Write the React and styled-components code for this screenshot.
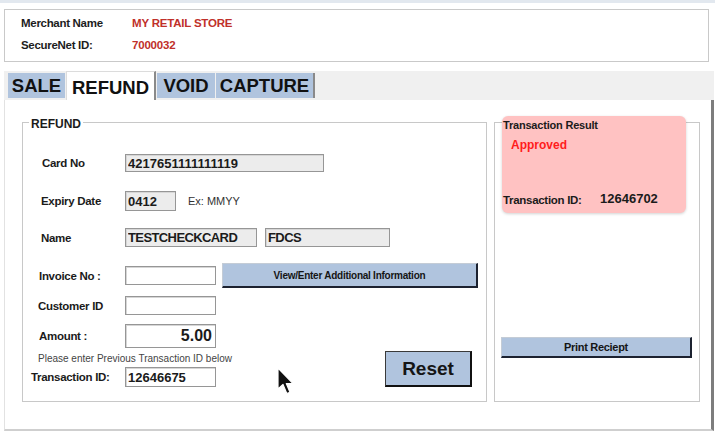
import React from "react";
import styled, { createGlobalStyle } from "styled-components";

const GlobalStyle = createGlobalStyle`
  html, body { margin: 0; padding: 0; background: #fff; }
  body { font-family: "Liberation Sans", Arial, sans-serif; color: #1b1b1b; }
  #root { width: 715px; height: 434px; }
`;

const Page = styled.div`
  width: 715px;
  height: 434px;
  overflow: hidden;
  background: #fff;
  display: flex;
  flex-direction: column;
`;

const TopBar = styled.div`
  height: 3px;
  background: #e2e8ef;
`;

const InfoBox = styled.div`
  margin: 6px 0 0 4px;
  width: 705px;
  height: 53px;
  box-sizing: border-box;
  border: 1px solid #c9c9c9;
  padding: 6px 0 0 16px;
  display: flex;
  flex-direction: column;
  gap: 8px;
`;

const InfoRow = styled.div`
  display: flex;
  align-items: center;
  height: 14px;
`;

const InfoLabel = styled.span`
  width: 111px;
  font-size: 11.5px;
  font-weight: bold;
  letter-spacing: -0.3px;
  color: #1d1d1d;
`;

const InfoValue = styled.span`
  font-size: 11.5px;
  font-weight: bold;
  letter-spacing: -0.2px;
  color: #c0302a;
`;

const TabStrip = styled.div`
  margin: 9px 0 0 4px;
  width: 710px;
  height: 29px;
  box-sizing: border-box;
  background: #f0f0f0;
  display: flex;
  align-items: flex-start;
  padding-left: 4px;
`;

const Tab = styled.div`
  box-sizing: border-box;
  width: ${(p) => p.$w}px;
  height: ${(p) => (p.$active ? 29 : 25)}px;
  margin-top: ${(p) => (p.$active ? 0 : 2)}px;
  margin-right: 1px;
  padding-top: ${(p) => (p.$active ? 3 : 1)}px;
  background: ${(p) => (p.$active ? "#fff" : "#b0c4de")};
  border-left: ${(p) => (p.$active ? "1px solid #dcdcdc" : "none")};
  border-top: ${(p) => (p.$active ? "1px solid #dcdcdc" : "none")};
  border-right: ${(p) => (p.$active || p.$last ? "2px solid #8a8a8a" : "none")};
  display: flex;
  align-items: center;
  justify-content: center;
  font-size: 18.5px;
  font-weight: bold;
  color: #111;
`;

const Panel = styled.div`
  position: relative;
  margin-left: 4px;
  width: 710px;
  height: 331px;
  box-sizing: border-box;
  border-left: 1px solid #e2e2e2;
  border-right: 3px solid #7d7d7d;
  border-bottom: 2px solid #cfcfcf;
  padding: 22px 0 0 17px;
  display: flex;
  align-items: flex-start;
  gap: 7px;
`;

const GroupBox = styled.div`
  position: relative;
  box-sizing: border-box;
  width: ${(p) => p.$w}px;
  height: 280px;
  border: 1px solid #c8c8c8;
  display: flex;
  flex-direction: column;
`;

const Legend = styled.span`
  position: absolute;
  top: -6px;
  left: 6px;
  padding: 0 2px;
  background: #fff;
  font-size: 12px;
  font-weight: bold;
  color: #1b1b1b;
`;

const FormRows = styled.div`
  display: flex;
  flex-direction: column;
  padding-top: 31px;
`;

const FormRow = styled.div`
  display: grid;
  grid-template-columns: 102px auto;
  align-items: center;
  height: ${(p) => p.$h}px;
  margin-top: ${(p) => p.$mt || 0}px;
`;

const Label = styled.span`
  padding-left: ${(p) => p.$in}px;
  font-size: 11.5px;
  font-weight: bold;
  letter-spacing: -0.3px;
  color: #1b1b1b;
  white-space: nowrap;
`;

const Fields = styled.div`
  display: flex;
  align-items: center;
  gap: ${(p) => p.$gap || 8}px;
  height: 100%;
`;

const Field = styled.input`
  box-sizing: border-box;
  width: ${(p) => p.$w}px;
  height: ${(p) => p.$h}px;
  margin: 0;
  padding: 0 ${(p) => (p.$right ? 3 : 2)}px 0 2px;
  border: 1px solid #969696;
  box-shadow: inset 1px 1px 0 #d6d6d6;
  background: ${(p) => (p.$gray ? "#ececec" : "#fff")};
  font-family: "Liberation Sans", Arial, sans-serif;
  font-size: ${(p) => p.$fs || 13}px;
  font-weight: bold;
  letter-spacing: ${(p) => (p.$tight ? "-0.6px" : "0")};
  text-align: ${(p) => (p.$right ? "right" : "left")};
  color: #1b1b1b;
  outline: none;
`;

const Hint = styled.span`
  font-size: 11px;
  color: #333;
  margin-left: 2px;
`;

const Note = styled.div`
  height: 12px;
  margin-top: 5px;
  padding-left: 15px;
  font-size: 10px;
  line-height: 12px;
  color: #444;
  white-space: nowrap;
`;

const FlatButton = styled.button`
  box-sizing: border-box;
  width: ${(p) => p.$w}px;
  height: ${(p) => p.$h}px;
  margin: 0;
  padding: 0;
  background: #b0c4de;
  border-top: 1px solid #c4ccd6;
  border-left: 1px solid #c4ccd6;
  border-right: 2px solid #1c2230;
  border-bottom: 2px solid #1c2230;
  font-family: "Liberation Sans", Arial, sans-serif;
  font-size: ${(p) => p.$fs || 11}px;
  font-weight: bold;
  letter-spacing: ${(p) => p.$ls || 0}px;
  color: #151515;
`;

const BottomBlock = styled.div`
  display: flex;
  align-items: flex-end;
  margin-top: 8px;
`;

const LeftCol = styled.div`
  display: flex;
  flex-direction: column;
`;

const ResetButton = styled(FlatButton)`
  margin-left: auto;
  margin-right: 14px;
  border-top: 1px solid #3a3a3a;
  border-left: 1px solid #3a3a3a;
  border-right: 2px solid #111;
  border-bottom: 2px solid #111;
`;

const ResultCard = styled.div`
  box-sizing: border-box;
  margin: -7px 0 0 7px;
  width: 184px;
  height: 97px;
  border-radius: 6px;
  background: #ffc2c2;
  box-shadow: 0 1px 3px rgba(0, 0, 0, 0.18);
  padding: 2px 0 7px 1px;
  display: flex;
  flex-direction: column;
`;

const ResultTitle = styled.div`
  font-size: 11px;
  font-weight: bold;
  letter-spacing: -0.2px;
  line-height: 14px;
  color: #1b1b1b;
`;

const Approved = styled.div`
  margin: 6px 0 0 8px;
  font-size: 12px;
  font-weight: bold;
  color: #ff1c1c;
`;

const ResultRow = styled.div`
  margin-top: auto;
  display: flex;
  align-items: center;
`;

const ResultLabel = styled.span`
  width: 97px;
  font-size: 11.5px;
  font-weight: bold;
  letter-spacing: -0.3px;
  color: #1b1b1b;
`;

const ResultValue = styled.span`
  font-size: 13px;
  font-weight: bold;
  color: #1b1b1b;
  margin-top: -3px;
`;

const PrintButton = styled(FlatButton)`
  margin: 124px 0 0 6px;
`;

const Cursor = styled.svg`
  position: absolute;
  left: 272px;
  top: 267px;
`;

export default function App() {
  return (
    <>
      <GlobalStyle />
      <Page>
        <TopBar />
        <InfoBox>
          <InfoRow>
            <InfoLabel>Merchant Name</InfoLabel>
            <InfoValue>MY RETAIL STORE</InfoValue>
          </InfoRow>
          <InfoRow>
            <InfoLabel>SecureNet ID:</InfoLabel>
            <InfoValue>7000032</InfoValue>
          </InfoRow>
        </InfoBox>

        <TabStrip>
          <Tab $w={57}>SALE</Tab>
          <Tab $w={90} $active>REFUND</Tab>
          <Tab $w={58}>VOID</Tab>
          <Tab $w={99} $last>CAPTURE</Tab>
        </TabStrip>

        <Panel>
          <GroupBox $w={465}>
            <Legend>REFUND</Legend>
            <FormRows>
              <FormRow $h={18}>
                <Label $in={19}>Card No</Label>
                <Fields>
                  <Field $w={199} $h={18} $gray readOnly defaultValue="4217651111111119" />
                </Fields>
              </FormRow>
              <FormRow $h={20} $mt={19}>
                <Label $in={18}>Expiry Date</Label>
                <Fields $gap={10}>
                  <Field $w={51} $h={20} $gray readOnly defaultValue="0412" />
                  <Hint>Ex: MMYY</Hint>
                </Fields>
              </FormRow>
              <FormRow $h={19} $mt={17}>
                <Label $in={18}>Name</Label>
                <Fields $gap={8}>
                  <Field $w={132} $h={19} $gray $tight readOnly defaultValue="TESTCHECKCARD" />
                  <Field $w={125} $h={19} $gray $tight readOnly defaultValue="FDCS" />
                </Fields>
              </FormRow>
              <FormRow $h={25} $mt={16}>
                <Label $in={16}>Invoice No :</Label>
                <Fields $gap={6}>
                  <Field $w={91} $h={19} readOnly defaultValue="" />
                  <FlatButton $w={256} $h={25} $fs={10} $ls={-0.25}>
                    View/Enter Additional Information
                  </FlatButton>
                </Fields>
              </FormRow>
              <BottomBlock>
                <LeftCol>
                  <FormRow $h={19}>
                    <Label $in={15}>Customer ID</Label>
                    <Fields>
                      <Field $w={91} $h={19} readOnly defaultValue="" />
                    </Fields>
                  </FormRow>
                  <FormRow $h={24} $mt={9}>
                    <Label $in={16}>Amount :</Label>
                    <Fields>
                      <Field $w={91} $h={24} $fs={16} $right readOnly defaultValue="5.00" />
                    </Fields>
                  </FormRow>
                  <Note>Please enter Previous Transaction ID below</Note>
                  <FormRow $h={20} $mt={2}>
                    <Label $in={8}>Transaction ID:</Label>
                    <Fields>
                      <Field $w={91} $h={20} readOnly defaultValue="12646675" />
                    </Fields>
                  </FormRow>
                </LeftCol>
                <ResetButton $w={87} $h={36} $fs={19}>
                  Reset
                </ResetButton>
              </BottomBlock>
            </FormRows>
          </GroupBox>

          <GroupBox $w={206}>
            <ResultCard>
              <ResultTitle>Transaction Result</ResultTitle>
              <Approved>Approved</Approved>
              <ResultRow>
                <ResultLabel>Transaction ID:</ResultLabel>
                <ResultValue>12646702</ResultValue>
              </ResultRow>
            </ResultCard>
            <PrintButton $w={191} $h={21} $ls={-0.3}>
              Print Reciept
            </PrintButton>
          </GroupBox>

          <Cursor width="20" height="30" viewBox="0 0 20 30">
            <path
              d="M1 1 L1 22 L6 17.5 L9.8 26.5 L13 25.2 L9.3 16.5 L16 16.5 Z"
              fill="#111"
              stroke="#fff"
              strokeWidth="1.2"
              strokeLinejoin="round"
            />
          </Cursor>
        </Panel>
      </Page>
    </>
  );
}
